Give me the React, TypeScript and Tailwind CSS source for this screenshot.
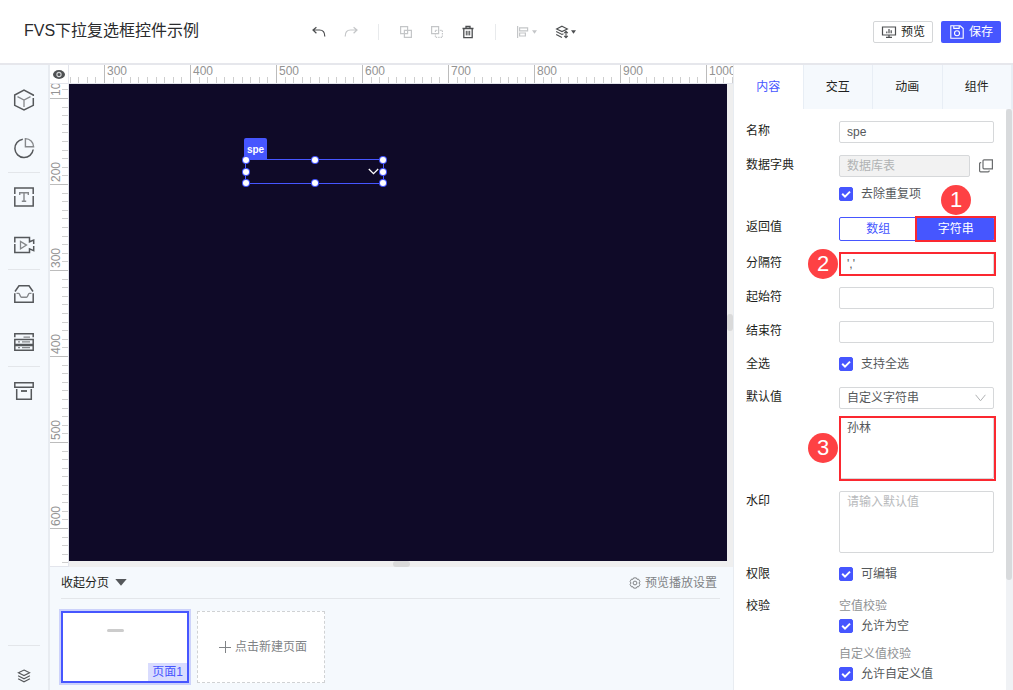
import { useEffect, useRef, useState, type ReactNode } from "react";

const PX_PER_UNIT = 8.6;

function Svg({ size, children, box = 20 }: { size: number; box?: number; children: ReactNode }) {
  return (
    <svg width={size} height={size} viewBox={`0 0 ${box} ${box}`} fill="none" stroke="currentColor" aria-hidden="true">
      {children}
    </svg>
  );
}

/* ---------- side bar icons, drawn on a 22px grid ---------- */

const CubeIcon = () => (
  <Svg size={22} box={22}>
    <path strokeWidth="1.5" d="M20.3 7V6L11 1 1.7 6v10.4L11 21l9.3-4.6V9" />
    <path strokeWidth="1.3" stroke="#85888b" d="M4.5 7.7 11 11l6.5-3.3M11 11v7" />
  </Svg>
);
const PieIcon = () => (
  <Svg size={22} box={22}>
    <path strokeWidth="1.5" d="M9.8 2.2A9.2 9.2 0 1 0 20.2 12.5" />
    <path strokeWidth="1.4" stroke="#85888b" d="M12.4 1.6v8.2h8.2a8.3 8.3 0 0 0-8.2-8.2z" />
  </Svg>
);
const TextIcon = () => (
  <Svg size={22} box={22}>
    <path strokeWidth="1.5" d="M1.8 8V2h18.4v6M1.8 10v10h18.4V10" />
    <path strokeWidth="1.4" stroke="#85888b" d="M6.7 9V6.8h8.6V9M11 6.8v8.4M8.8 15.3h4.4" />
  </Svg>
);
const VideoIcon = () => (
  <Svg size={22} box={22}>
    <path strokeWidth="1.5" d="M1.8 8.5V3.6h14.7v4.2l4.2-1.7v3.8M20.7 12v4.6l-4.2-1.8v3.7H1.8V10" />
    <path strokeWidth="1.3" stroke="#85888b" d="M7.5 7.4v7.4l6-3.7z" />
  </Svg>
);
const InboxIcon = () => (
  <Svg size={22} box={22}>
    <path strokeWidth="1.5" d="M2 8.5 6 2.8h10l4 5.7M1.8 10.3v9h18.4v-9" />
    <path strokeWidth="1.4" stroke="#85888b" d="M3.5 10.4h2.3c1 0 1.2 3.8 2.6 3.8h5.2c1.4 0 1.6-3.8 2.6-3.8h2.3" />
  </Svg>
);
const ServerIcon = () => (
  <Svg size={22} box={22}>
    <path strokeWidth="1.5" d="M1.8 6.2V2.8h18.4v3.4M1.8 8.4h18.4v5H1.8zM1.8 14.4h18.4v4.8H1.8z" />
    <path strokeWidth="1.2" stroke="#85888b" d="M10.5 6.2H17M5 10.9h2M9 10.9h8M5 16.7h2M9 16.7h8" />
  </Svg>
);
const ArchiveIcon = () => (
  <Svg size={22} box={22}>
    <path strokeWidth="1.5" d="M1.8 2.8h18.4v4.4H1.8zM3.7 9v10.2h14.6V9" />
    <path strokeWidth="1.8" d="M8 11h6" />
  </Svg>
);
const StackIcon = () => (
  <Svg size={14} box={14}>
    <path strokeWidth="1.1" d="M7 1 12.6 3.8 7 6.6 1.4 3.8zM1.1 6.8 7 9.8l5.9-3M1.1 9.8 7 12.8l5.9-3" />
  </Svg>
);

/* ---------- tool bar icons ---------- */

const UndoIcon = () => (
  <Svg size={14} box={14}>
    <path strokeWidth="1.2" d="M4.4 2.2 1 5l3.4 3.2M1 5h6.5c3 0 5.3 2 5.3 6.5" />
  </Svg>
);
const RedoIcon = () => (
  <Svg size={14} box={14}>
    <path strokeWidth="1.2" d="M9.6 2.2 13 5 9.6 8.2M13 5H6.5C3.5 5 1.2 7 1.2 11.5" />
  </Svg>
);
const GroupIcon = () => (
  <Svg size={14} box={14}>
    <path strokeWidth="1.2" d="M1.6 1.6h7v7h-7zM5.4 5.4h7v7h-7z" />
  </Svg>
);
const UngroupIcon = () => (
  <Svg size={14} box={14}>
    <path strokeWidth="1.2" d="M1.6 1.6h7v7h-7z" />
    <path strokeWidth="1.2" strokeDasharray="1.4 1" d="M5.4 5.4h7v7h-7z" />
  </Svg>
);
const TrashIcon = () => (
  <Svg size={14} box={14}>
    <path strokeWidth="1.3" d="M1.5 3.5h11M5 3V1.5h4V3M2.8 3.5v9.1h8.4V3.5" />
    <path strokeWidth="1" d="M5.3 5.8v4.6M7 5.8v4.6M8.7 5.8v4.6" />
  </Svg>
);
const AlignIcon = () => (
  <Svg size={14} box={14}>
    <path strokeWidth="1.2" d="M1.6 1v12M3.6 2.8h8v3h-8zM3.6 8h5.8v3H3.6z" />
  </Svg>
);
const OrderIcon = () => (
  <Svg size={14} box={14}>
    <path strokeWidth="1.1" d="M7 1.2 12.4 4 7 6.6 1.6 4zM1.2 6.6 7 9.4l1.5-.7M1.2 9.4 7 12.4M11 6.4v6M9.2 8.2 11 6.4l1.8 1.8M9.2 10.8l1.8 1.8 1.8-1.8" />
  </Svg>
);
const Caret = () => (
  <svg width="5" height="4" viewBox="0 0 5 4" fill="currentColor" aria-hidden="true">
    <path d="M0 .3h5L2.5 3.8z" />
  </svg>
);

function ToolButton({ label, disabled, children }: { label: string; disabled?: boolean; children: ReactNode }) {
  return (
    <button
      type="button"
      aria-label={label}
      disabled={disabled}
      className="flex h-6 items-center gap-0.5 text-[#4c4e50] disabled:text-[#c4c6c8]"
    >
      {children}
    </button>
  );
}

function Header() {
  return (
    <header className="flex h-[65px] shrink-0 items-center border-b-2 border-[#e6e7ec] bg-white pr-3 pl-6">
      <h1 className="w-72 shrink-0 pb-0.5 text-base text-[#2a2b2d]">FVS下拉复选框控件示例</h1>
      <div className="flex items-center">
        <div className="flex items-center gap-[18px]">
          <ToolButton label="撤销"><UndoIcon /></ToolButton>
          <ToolButton label="重做" disabled><RedoIcon /></ToolButton>
        </div>
        <div className="mx-5 h-4 w-px bg-[#e8eaec]" />
        <div className="flex items-center gap-[17px]">
          <ToolButton label="组合" disabled><GroupIcon /></ToolButton>
          <ToolButton label="取消组合" disabled><UngroupIcon /></ToolButton>
          <ToolButton label="删除"><TrashIcon /></ToolButton>
        </div>
        <div className="mx-5 h-4 w-px bg-[#e8eaec]" />
        <div className="flex items-center gap-[18px]">
          <ToolButton label="对齐" disabled><AlignIcon /><Caret /></ToolButton>
          <ToolButton label="层级"><OrderIcon /><Caret /></ToolButton>
        </div>
      </div>
      <div className="ml-auto flex gap-2 text-xs">
        <button type="button" className="flex h-[22px] w-[60px] items-center justify-center gap-1 rounded-xs border border-[#d4d6d8] text-[#1d1e20]">
          <svg width="16" height="14" viewBox="0 0 16 14" fill="none" stroke="#4c4e50" strokeWidth="1.2" aria-hidden="true">
            <path d="M1.5 2h13v8h-13zM8 10v2M5 12.4h6M5.8 6.5v1.8M8 4v4.3M10.2 5.3v3" />
          </svg>
          预览
        </button>
        <button type="button" className="flex h-[22px] w-[60px] items-center justify-center gap-1 rounded-xs bg-[#4656ff] text-white">
          <svg width="16" height="16" viewBox="0 0 16 16" fill="none" stroke="currentColor" strokeWidth="1.1" aria-hidden="true">
            <path d="M1.8 1.8h9.4l3 2.8v9.6H1.8zM4.8 2v2.4h5.4V2" />
            <circle cx="8" cy="9.3" r="2.5" />
          </svg>
          保存
        </button>
      </div>
    </header>
  );
}

const SIDE_GROUPS: { label: string; icon: ReactNode }[][] = [
  [{ label: "模型", icon: <CubeIcon /> }, { label: "图表", icon: <PieIcon /> }],
  [{ label: "文本", icon: <TextIcon /> }, { label: "视频", icon: <VideoIcon /> }],
  [{ label: "素材", icon: <InboxIcon /> }, { label: "数据", icon: <ServerIcon /> }],
  [{ label: "资源", icon: <ArchiveIcon /> }],
];

function SideBar() {
  return (
    <nav className="flex w-[50px] shrink-0 flex-col border-r-2 border-[#e8ecf1] bg-[#f5f9fd] px-2 pt-[11px] text-[#55585b]">
      {SIDE_GROUPS.map((group, i) => (
        <div key={i} className={i > 0 ? "border-t border-[#e3e6ea]" : ""}>
          {group.map((item) => (
            <button key={item.label} type="button" aria-label={item.label} className="flex h-12 w-full items-center justify-center">
              {item.icon}
            </button>
          ))}
        </div>
      ))}
      <div className="mt-auto border-t border-[#e3e6ea] pt-[23px] pb-[7px]">
        <button type="button" aria-label="图层" className="flex w-full justify-center"><StackIcon /></button>
      </div>
    </nav>
  );
}

/* Measured length of a ruler, so that only the ticks that fit are drawn. */
function useSize() {
  const ref = useRef<SVGSVGElement>(null);
  const [size, setSize] = useState({ width: 0, height: 0 });
  useEffect(() => {
    const node = ref.current;
    if (!node) return;
    const measure = () => {
      const { width, height } = node.getBoundingClientRect();
      setSize({ width, height });
    };
    measure();
    const observer = new ResizeObserver(measure);
    observer.observe(node);
    return () => observer.disconnect();
  }, []);
  return { ref, size };
}

/* Tick n sits at origin + n * PX_PER_UNIT; every tenth tick carries a number. */
function ticks(first: number, origin: number, length: number) {
  const last = Math.floor((length - origin) / PX_PER_UNIT);
  return Array.from({ length: Math.max(0, last - first + 1) }, (_, i) => first + i);
}

function HorizontalRuler() {
  const { ref, size } = useSize();
  return (
    <svg ref={ref} className="block h-[18px] min-w-0 flex-1 overflow-hidden" shapeRendering="crispEdges" aria-hidden="true">
      {ticks(-4, 35, size.width).map((n) => {
        const x = Math.round(35 + n * PX_PER_UNIT);
        const major = n % 10 === 0;
        return (
          <g key={n}>
            <rect x={x} y={major ? 0 : 12} width="1" height={major ? 18 : 6} fill={major ? "#bcbcbc" : "#cfcfcf"} />
            {major && <text x={x + 3} y="10" fontSize="12" fill="#939393">{300 + n * 10}</text>}
          </g>
        );
      })}
    </svg>
  );
}

function VerticalRuler() {
  const { ref, size } = useSize();
  return (
    <svg ref={ref} className="block h-full w-[18px] overflow-hidden" shapeRendering="crispEdges" aria-hidden="true">
      {ticks(-1, 14, size.height).map((n) => {
        const y = Math.round(14 + n * PX_PER_UNIT);
        const major = n % 10 === 0;
        return (
          <g key={n}>
            <rect x={major ? 0 : 12} y={y} width={major ? 18 : 6} height="1" fill={major ? "#bcbcbc" : "#cfcfcf"} />
            {major && (
              <text transform={`translate(10 ${y - 2}) rotate(-90)`} fontSize="12" fill="#939393">{100 + n * 10}</text>
            )}
          </g>
        );
      })}
    </svg>
  );
}

const HANDLES = [
  "left-0 top-0", "left-1/2 top-0", "left-full top-0",
  "left-0 top-1/2", "left-full top-1/2",
  "left-0 top-full", "left-1/2 top-full", "left-full top-full",
];

function Workspace() {
  return (
    <div className="flex min-h-0 flex-1 flex-col">
      <div className="flex h-[19px] shrink-0 border-b border-[#e3e5ec] bg-white">
        <button type="button" aria-label="显示参考线" className="flex w-[18px] shrink-0 items-center justify-center">
          <svg width="12" height="9" viewBox="0 0 12 9" aria-hidden="true">
            <ellipse cx="6" cy="4.5" rx="6" ry="4.4" fill="#4f5153" />
            <circle cx="6" cy="4.5" r="2.1" fill="#4f5153" stroke="#d5d6d8" strokeWidth="1.1" />
          </svg>
        </button>
        <div className="w-px bg-[#e3e5ec]" />
        <HorizontalRuler />
      </div>
      <div className="flex min-h-0 flex-1">
        <div className="w-[19px] shrink-0 border-r border-b border-[#e3e5ec] bg-white">
          <VerticalRuler />
        </div>
        <div className="flex min-w-0 flex-1 flex-col">
          <div className="flex min-h-0 flex-1">
            <div className="relative min-w-0 flex-1 overflow-hidden bg-[#0f0a28]">
              <div className="absolute top-[54px] left-[175px] flex h-[22px] w-[23px] items-center justify-center rounded-t-xs bg-[#4656ff] text-[10px] font-bold text-white">
                spe
              </div>
              <div className="absolute top-[75px] left-[176px] h-[25px] w-[139px] border border-[#4656ff]">
                <svg className="absolute top-2 right-1 text-white" width="11" height="7" viewBox="0 0 11 7" fill="none" stroke="currentColor" strokeWidth="1.3" aria-hidden="true">
                  <path d="M.8 1l4.7 4.7L10.2 1" />
                </svg>
                {HANDLES.map((pos) => (
                  <span key={pos} className={`absolute size-1.5 -translate-1/2 rounded-full bg-white shadow-[0_0_0_1px_#4656ff] ${pos}`} />
                ))}
              </div>
            </div>
            <div className="flex w-1.5 flex-col justify-center bg-[#efefef]">
              <div className="h-[17px] rounded-full bg-[#dadada]" />
            </div>
          </div>
          <div className="flex h-1.5 justify-center bg-[#efefef]">
            <div className="w-[17px] rounded-full bg-[#dadada]" />
          </div>
        </div>
      </div>
    </div>
  );
}

function PageStrip() {
  return (
    <section className="shrink-0 bg-[#f5f9fd] pr-[13px] pb-[7px] pl-[11px] text-xs">
      <div className="flex h-8 items-center justify-between border-b border-[#e3e6ea]">
        <button type="button" className="flex items-center gap-1.5 text-[#1d1e20]">
          收起分页
          <svg width="12" height="7" viewBox="0 0 12 7" fill="#55585b" aria-hidden="true"><path d="M.3 0h11.4L6 6.8z" /></svg>
        </button>
        <button type="button" className="mr-[3px] flex items-center gap-1 text-[#808386]">
          <svg width="12" height="12" viewBox="0 0 12 12" fill="none" stroke="currentColor" aria-hidden="true">
            <path d="M4.6.9h2.8l.6 1.4 1.5-.2 1.4 2.4-.9 1.5.9 1.5-1.4 2.4-1.5-.2-.6 1.4H4.6L4 9.7l-1.5.2-1.4-2.4L2 6l-.9-1.5 1.4-2.4 1.5.2z" />
            <circle cx="6" cy="6" r="1.9" />
          </svg>
          预览播放设置
        </button>
      </div>
      <div className="mt-3 flex gap-2">
        <button type="button" className="relative flex h-[72px] w-32 items-end justify-end border-2 border-[#4656ff] bg-white ring-2 ring-[#ccd2fb]">
          <span className="absolute top-4 left-11 h-[3px] w-[17px] rounded-xs bg-[#cccccc]" />
          <span className="flex h-[18px] items-center bg-[#d9dcfe] px-1 text-[#4656ff]">页面1</span>
        </button>
        <button type="button" className="flex h-[72px] w-32 items-center justify-center gap-1 border border-dashed border-[#d0d2d4] bg-white pl-1 text-[#808386]">
          <svg width="12" height="12" viewBox="0 0 12 12" stroke="currentColor" aria-hidden="true"><path d="M0 6.5h12M6.5 0v12" /></svg>
          点击新建页面
        </button>
      </div>
    </section>
  );
}

/* ---------- property panel ---------- */

const BOX = "w-full rounded-xs border border-[#d6d8da] bg-white px-[7px] text-xs text-[#55585b] placeholder:text-[#b8babc] outline-none";
const INPUT = `block h-[22px] ${BOX}`;

function Row({ label, htmlFor, className = "mt-3", children }: { label?: string; htmlFor?: string; className?: string; children: ReactNode }) {
  return (
    <div className={`flex ${className}`}>
      {label && htmlFor && <label htmlFor={htmlFor} className="h-5 w-[93px] shrink-0 leading-5 text-[#1d1e20]">{label}</label>}
      {label && !htmlFor && <span className="h-5 w-[93px] shrink-0 leading-5 text-[#1d1e20]">{label}</span>}
      {!label && <span className="w-[93px] shrink-0" />}
      <div className="relative min-w-0 flex-1">{children}</div>
    </div>
  );
}

function Check({ label }: { label: string }) {
  const [on, setOn] = useState(true);
  return (
    <label className="flex h-5 items-center gap-2 text-[#55585b]">
      <span className="relative flex size-3.5">
        <input
          type="checkbox"
          checked={on}
          onChange={(e) => setOn(e.target.checked)}
          className="size-3.5 appearance-none rounded-xs border border-[#c4c6c8] bg-white checked:border-[#4656ff] checked:bg-[#4656ff]"
        />
        {on && (
          <svg className="pointer-events-none absolute inset-0" width="14" height="14" viewBox="0 0 14 14" fill="none" stroke="white" strokeWidth="2" aria-hidden="true">
            <path d="M3.2 6.8l2.8 2.8 5-5" />
          </svg>
        )}
      </span>
      {label}
    </label>
  );
}

function Badge({ n, className }: { n: number; className: string }) {
  return (
    <span className={`absolute z-10 flex size-[30px] items-center justify-center rounded-full bg-[#fe4144] text-[22px] leading-none text-white ${className}`}>
      {n}
    </span>
  );
}

const Highlight = ({ className }: { className: string }) => (
  <span className={`pointer-events-none absolute border-2 border-[#fb2830] ${className}`} />
);

function Tabs() {
  return (
    <div role="tablist" className="flex h-11 shrink-0 border-r-2 border-[#e8eef5] text-xs">
      {["内容", "交互", "动画", "组件"].map((tab, i) => (
        <button
          key={tab}
          type="button"
          role="tab"
          aria-selected={i === 0}
          className={i === 0 ? "flex-1 bg-white text-[#4656ff]" : "flex-1 border-l border-[#e8eef5] bg-[#f5f9fd] text-[#1d1e20]"}
        >
          {tab}
        </button>
      ))}
    </div>
  );
}

function PropertyPanel() {
  return (
    <aside className="flex w-[280px] shrink-0 flex-col border-l border-[#e8ecf1] bg-white text-xs">
      <Tabs />
      <div className="flex min-h-0 flex-1">
        <form className="min-w-0 flex-1 overflow-hidden px-3">
          <Row label="名称" htmlFor="name"><input id="name" className={INPUT} defaultValue="spe" /></Row>
          <Row label="数据字典" htmlFor="dict">
            <div className="flex items-center justify-between">
              <input id="dict" disabled placeholder="数据库表" className="h-[22px] w-[131px] rounded-xs border border-[#d6d8da] bg-[#f2f2f2] px-[7px] placeholder:text-[#b0b2b4]" />
              <button type="button" aria-label="选择数据字典" className="text-[#6a6c6e]">
                <Svg size={16} box={16}><path strokeWidth="1.2" d="M6 1.8h8.4v9H6a1 1 0 0 1-1-1v-7a1 1 0 0 1 1-1zM3.2 4.6h-.6a1 1 0 0 0-1 1v7.2a1 1 0 0 0 1 1h7.6a1 1 0 0 0 1-1v-.4" /></Svg>
              </button>
            </div>
          </Row>
          <Row className="mt-[7px]"><Check label="去除重复项" /></Row>
          <Row label="返回值" className="mt-[13px]">
            <div className="flex h-6">
              <button type="button" className="flex-1 rounded-l-xs border border-[#4656ff] text-[#4656ff]">数组</button>
              <button type="button" className="flex-1 rounded-r-xs bg-[#4656ff] text-white">字符串</button>
            </div>
            <Highlight className="-top-px -right-0.5 -bottom-px left-[76px]" />
            <Badge n={1} className="right-[23px] bottom-[26px]" />
          </Row>
          <Row label="分隔符" htmlFor="separator">
            <input id="separator" className={INPUT} defaultValue="','" />
            <Highlight className="-top-px -right-0.5 -bottom-px left-0" />
            <Badge n={2} className="-top-1 right-full mr-px" />
          </Row>
          <Row label="起始符" htmlFor="start"><input id="start" className={INPUT} /></Row>
          <Row label="结束符" htmlFor="end"><input id="end" className={INPUT} /></Row>
          <Row label="全选" className="mt-[11px]"><Check label="支持全选" /></Row>
          <Row label="默认值" htmlFor="mode" className="mt-[13px]">
            <select id="mode" className={`appearance-none ${INPUT}`}><option>自定义字符串</option></select>
            <svg className="pointer-events-none absolute top-[7px] right-2" width="11" height="8" viewBox="0 0 11 8" fill="none" stroke="#b0b2b4" aria-hidden="true">
              <path d="M.6.8l4.9 6 4.9-6" />
            </svg>
          </Row>
          <Row className="mt-2">
            <textarea aria-label="默认值内容" className={`block h-[62px] resize-none leading-5 ${BOX}`} defaultValue="孙林" />
            <Highlight className="-top-px -right-0.5 -bottom-0.5 left-0" />
            <Badge n={3} className="top-4 right-full mr-px" />
          </Row>
          <Row label="水印" htmlFor="hint">
            <textarea id="hint" placeholder="请输入默认值" className={`block h-[62px] resize-none leading-5 ${BOX}`} />
          </Row>
          <Row label="权限" className="mt-[11px]"><Check label="可编辑" /></Row>
          <Row label="校验">
            <p className="leading-5 text-[#909294]">空值校验</p>
            <Check label="允许为空" />
            <p className="mt-2 leading-5 text-[#909294]">自定义值校验</p>
            <Check label="允许自定义值" />
          </Row>
        </form>
        <div className="w-[7px] shrink-0 bg-[#f0f2f5]">
          <div className="h-[81%] w-1.5 rounded-full bg-[#d8dadc]" />
        </div>
      </div>
    </aside>
  );
}

export default function App() {
  return (
    <div className="flex h-screen flex-col overflow-hidden bg-white font-['Liberation_Sans','Noto_Sans_CJK_SC',sans-serif]">
      <Header />
      <div className="flex min-h-0 flex-1">
        <SideBar />
        <main className="flex min-w-0 flex-1 flex-col">
          <Workspace />
          <PageStrip />
        </main>
        <PropertyPanel />
      </div>
    </div>
  );
}
